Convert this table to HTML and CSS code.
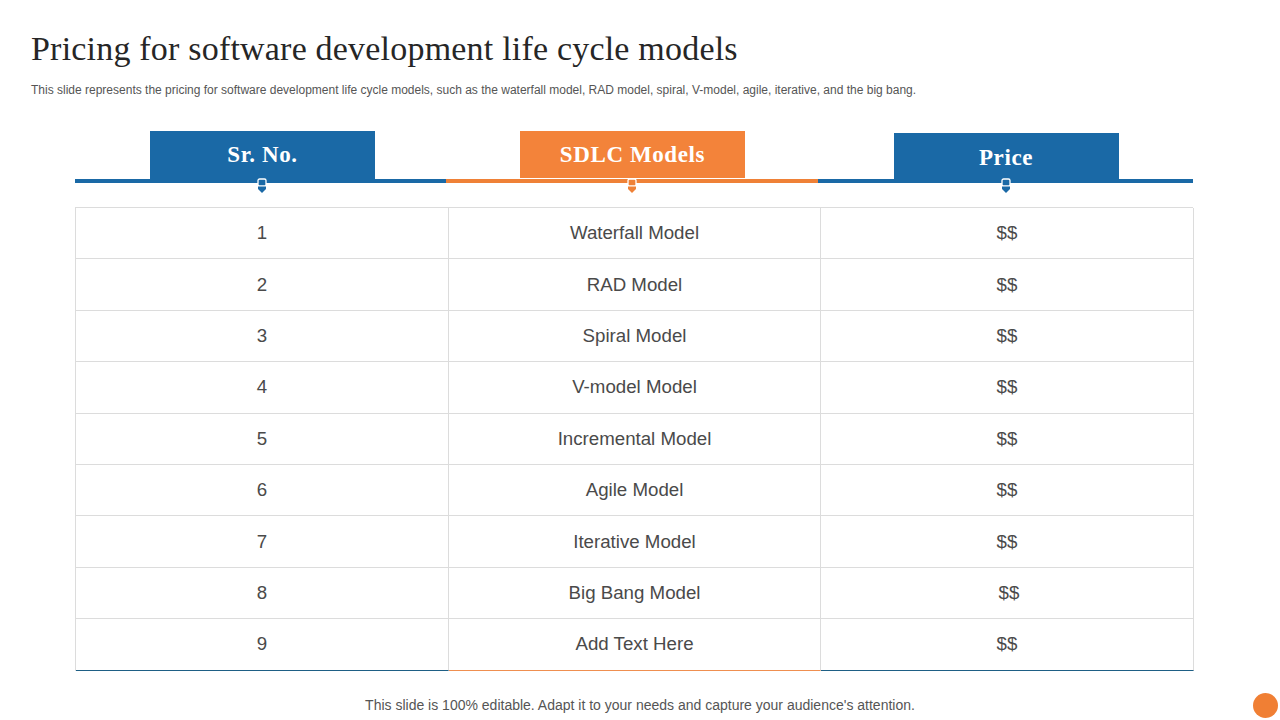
FILE: index.html
```html
<!DOCTYPE html>
<html lang="en">
<head>
<meta charset="utf-8">
<title>Pricing for software development life cycle models</title>
<link rel="stylesheet" href="styles.css">
</head>
<body>
<div class="slide">
  <h1 class="title">Pricing for software development life cycle models</h1>
  <p class="subtitle">This slide represents the pricing for software development life cycle models, such as the waterfall model, RAD model, spiral, V-model, agile, iterative, and the big bang.</p>

  <div class="table">
    <div class="head">
      <div class="hcol blue">
        <div class="tab tab1">Sr. No.</div>
        <div class="bar"></div>
        <svg class="marker" viewBox="0 0 10 16" width="10" height="16"><rect x="1" y="1" width="8" height="7" rx="1.6" class="mfill" stroke="#fff" stroke-width="1.3"/><path d="M1 8.5 H9 V11 L5 15 L1 11 Z" class="mfill"/></svg>
      </div>
      <div class="hcol orange">
        <div class="tab tab2">SDLC Models</div>
        <div class="bar"></div>
        <svg class="marker" viewBox="0 0 10 16" width="10" height="16"><rect x="1" y="1" width="8" height="7" rx="1.6" class="mfill" stroke="#fff" stroke-width="1.3"/><path d="M1 8.5 H9 V11 L5 15 L1 11 Z" class="mfill"/></svg>
      </div>
      <div class="hcol blue">
        <div class="tab tab3">Price</div>
        <div class="bar"></div>
        <svg class="marker" viewBox="0 0 10 16" width="10" height="16"><rect x="1" y="1" width="8" height="7" rx="1.6" class="mfill" stroke="#fff" stroke-width="1.3"/><path d="M1 8.5 H9 V11 L5 15 L1 11 Z" class="mfill"/></svg>
      </div>
    </div>

    <div class="body">
      <div class="cell">1</div><div class="cell">Waterfall Model</div><div class="cell">$$</div>
      <div class="cell">2</div><div class="cell">RAD Model</div><div class="cell">$$</div>
      <div class="cell">3</div><div class="cell">Spiral Model</div><div class="cell">$$</div>
      <div class="cell">4</div><div class="cell">V-model Model</div><div class="cell">$$</div>
      <div class="cell">5</div><div class="cell">Incremental Model</div><div class="cell">$$</div>
      <div class="cell">6</div><div class="cell">Agile Model</div><div class="cell">$$</div>
      <div class="cell">7</div><div class="cell">Iterative Model</div><div class="cell">$$</div>
      <div class="cell">8</div><div class="cell">Big Bang Model</div><div class="cell shift">$$</div>
      <div class="cell last c1">9</div><div class="cell last c2">Add Text Here</div><div class="cell last c3">$$</div>
    </div>
  </div>

  <p class="footer">This slide is 100% editable. Adapt it to your needs and capture your audience's attention.</p>
  <span class="dot"></span>
</div>
</body>
</html>
```

FILE: styles.css
```css
* { box-sizing: border-box; }
html, body { margin: 0; padding: 0; background: #fff; }
body { width: 1280px; height: 720px; overflow: hidden; }

.slide {
  position: relative;
  width: 1280px;
  height: 720px;
  padding: 30px 0 0 31px;
  font-family: "Liberation Sans", Arial, sans-serif;
}

.title {
  margin: 0;
  font-family: Georgia, "Liberation Serif", serif;
  font-weight: normal;
  font-size: 34px;
  line-height: 38px;
  color: #262626;
  letter-spacing: 0.2px;
}

.subtitle {
  margin: 15px 0 0 0;
  font-size: 12px;
  line-height: 14px;
  color: #555;
}

.table {
  width: 1118px;
  margin: 33px 0 0 44px;
}

.head {
  display: grid;
  grid-template-columns: 371px 372px 375px;
  height: 77px;
}

.hcol {
  display: flex;
  flex-direction: column;
  align-items: center;
  justify-content: flex-end;
  position: relative;
  padding-bottom: 24px;
}

.tab {
  width: 225px;
  display: flex;
  align-items: center;
  justify-content: center;
  color: #fff;
  font-family: Georgia, "Liberation Serif", serif;
  font-weight: bold;
  font-size: 23px;
  letter-spacing: 0.6px;
}
.tab1 { height: 48px; padding-bottom: 0; margin-left: 4px; }
.tab2 { height: 48px; padding-bottom: 0; border-bottom: 1px solid #fff; margin-left: 1px; }
.tab3 { height: 46px; padding-top: 3px; margin-left: 1px; }

.bar { width: 100%; height: 4px; }

.blue .tab, .blue .bar { background: #1a69a6; }
.orange .bar { background: #ef8137; }
.orange .tab { background: #f3833a; }
.blue .mfill { fill: #1a69a6; }
.orange .mfill { fill: #ef8137; }

.marker {
  position: absolute;
  bottom: 13px;
  left: 50%;
  margin-left: -5px;
}
.hcol:first-child .marker { margin-left: -4px; }

.body {
  display: grid;
  grid-template-columns: 373px 372px 373px;
  grid-auto-rows: 51.4px;
  border-top: 1px solid #dcdcdc;
  border-left: 1px solid #dcdcdc;
}

.cell {
  display: flex;
  align-items: center;
  justify-content: center;
  border-right: 1px solid #dcdcdc;
  border-bottom: 1px solid #dcdcdc;
  font-size: 18.7px;
  color: #4a4a4a;
}
.cell.shift { padding-left: 4px; }
.cell.last.c1 { border-bottom: 1px solid #1e5f85; }
.cell.last.c2 { border-bottom: 1px solid #ef8f50; }
.cell.last.c3 { border-bottom: 1px solid #1e5f85; }

.footer {
  margin: 26px 0 0 -31px;
  text-align: center;
  font-size: 14px;
  color: #555;
}

.dot {
  position: absolute;
  right: 2px;
  bottom: 2px;
  width: 25px;
  height: 25px;
  border-radius: 50%;
  background: #f07f34;
}
```
